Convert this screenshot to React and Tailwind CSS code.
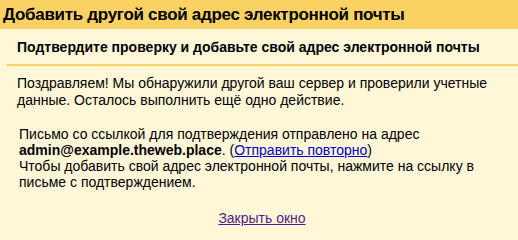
export default function App() {
  return (
    <div className="w-[518px] h-[240px] bg-[#fff7d7] font-['Liberation_Sans',Arial,sans-serif] text-black overflow-hidden">
      <div className="h-[29px] bg-[#fad163] px-[3px] flex items-center">
        <h1 className="text-[17px] font-bold leading-none tracking-[-0.3px]">Добавить другой свой адрес электронной почты</h1>
      </div>
      <div className="pl-[7px]">
        <div className="pl-[10px] pt-[10px] pb-[9px] text-[14px] font-bold leading-[16px] border-b-2 border-[#fad163]">
          Подтвердите проверку и добавьте свой адрес электронной почты
        </div>
      </div>
      <div className="px-[17px] pt-[9px] text-[14px] leading-[17px]">
        <p>
          Поздравляем! Мы обнаружили другой ваш сервер и проверили учетные данные. Осталось выполнить ещё одно действие.
        </p>
        <div className="pl-[2px] pt-[17px] leading-[16px]">
          Письмо со ссылкой для подтверждения отправлено на адрес <b>admin@example.theweb.place</b>. (
          <a href="#" className="text-[#0000cc] underline">Отправить повторно</a>)
          <br />
          Чтобы добавить свой адрес электронной почты, нажмите на ссылку в письме с подтверждением.
        </div>
        <div className="pt-[20px] pl-[6px] text-center">
          <a href="#" className="text-[#551a8b] underline">Закрыть окно</a>
        </div>
      </div>
    </div>
  );
}
